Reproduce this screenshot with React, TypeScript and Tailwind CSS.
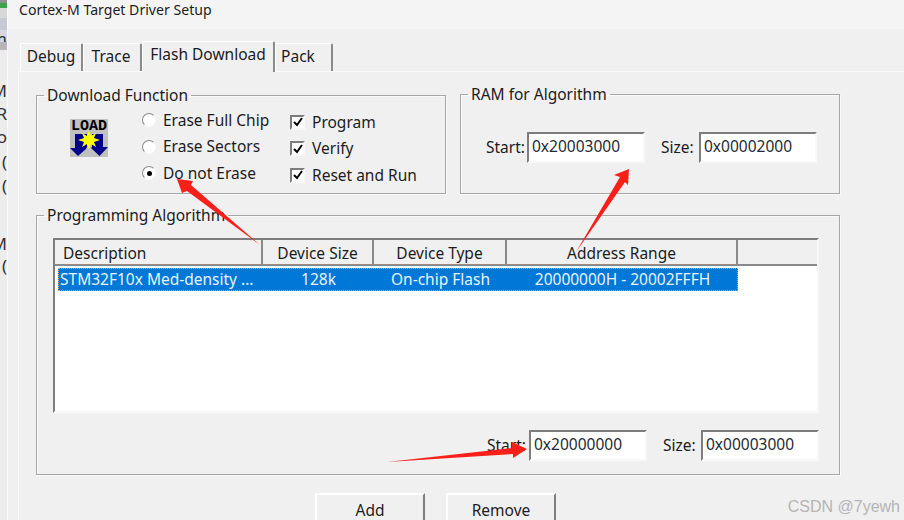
const FONT = "[font-family:'Noto_Sans','DejaVu_Sans',sans-serif]";

const COLUMNS = [
  { label: "Description", width: "w-[208px]", left: true },
  { label: "Device Size", width: "w-[111px]" },
  { label: "Device Type", width: "w-[133px]" },
  { label: "Address Range", width: "w-[231px]" },
];

const STRIP_ROWS = [
  { text: "", height: "h-[3px]", tone: "bg-[#8f8f8f]" },
  { text: "", height: "h-[5px]", tone: "bg-[#3fa34d]" },
  { text: "", height: "h-[10px]", tone: "bg-[#d8d8d8]" },
  { text: "", height: "h-[12px]", tone: "bg-[#c9c9d6]" },
  { text: "m", height: "h-[12px]", tone: "bg-[#d7d7e4]" },
  { text: "", height: "h-[8px]", tone: "bg-[#b9b3bb]" },
  { text: "", height: "h-[32px]", tone: "" },
  { text: "M", height: "h-[23px]", tone: "" },
  { text: "R", height: "h-[23px]", tone: "" },
  { text: "o", height: "h-[25px]", tone: "" },
  { text: "(", height: "h-[24px]", tone: "" },
  { text: "(", height: "h-[24px]", tone: "" },
  { text: "", height: "h-[34px]", tone: "" },
  { text: "M", height: "h-[22px]", tone: "" },
  { text: "(", height: "h-[24px]", tone: "" },
];

function LoadIcon() {
  return (
    <svg width="38" height="38" viewBox="0 0 38 38" className="block">
      <rect width="38" height="38" fill="#c0c0c0" />
      <text x="1" y="11" textLength="36" lengthAdjust="spacingAndGlyphs" fontFamily="Liberation Mono" fontWeight="700" fontSize="14" fill="#000">
        LOAD
      </text>
      <path d="M5 15H17V28L16 30 8 37 0 29H5z" fill="#00008a" />
      <path d="M22 15H33V28H38L29.5 37 21 29 22 28z" fill="#00008a" />
      <path d="M19 11l2 6 5-3-2 5 6 2-6 2 2 5-5-3-2 6-2-6-5 3 2-5-6-2 6-2-2-5 5 3z" fill="#ffff00" />
    </svg>
  );
}

function Radio({ checked }: { checked?: boolean }) {
  return (
    <span className="flex h-[14px] w-[14px] items-center justify-center rounded-full border border-t-[#8a8a8a] border-l-[#8a8a8a] border-r-[#f8f8f8] border-b-[#f8f8f8] bg-white">
      {checked && <span className="h-[5px] w-[5px] rounded-full bg-black" />}
    </span>
  );
}

function Check() {
  return (
    <span className="flex h-[15px] w-[15px] items-center justify-center border-2 border-t-[#7d7d7d] border-l-[#7d7d7d] border-r-[#f8f8f8] border-b-[#f8f8f8] bg-white">
      <svg width="10" height="10" viewBox="0 0 10 10">
        <path d="M1 5l3 3 5-7" fill="none" stroke="#000" strokeWidth="2" />
      </svg>
    </span>
  );
}

function Field({ value, className }: { value: string; className?: string }) {
  return (
    <div className={`h-[31px] w-[118px] border-2 border-t-[#7d7d7d] border-l-[#7d7d7d] border-r-[#f8f8f8] border-b-[#f8f8f8] bg-white pl-[3px] text-[15.5px] leading-[24px] text-[#1f2a33] ${className ?? ""}`}>
      {value}
    </div>
  );
}

function Group({ title, className, children }: { title: string; className: string; children: React.ReactNode }) {
  return (
    <fieldset className={`border border-[#a6a6a6] shadow-[inset_1px_1px_0_#fafafa,1px_1px_0_#fafafa] ${className}`}>
      <legend className="ml-[7px] px-[3px] text-[15.5px] leading-[20px]">{title}</legend>
      {children}
    </fieldset>
  );
}

function Tab({ label, width, active, className }: { label: string; width: string; active?: boolean; className?: string }) {
  return (
    <div
      className={`${width} flex items-center justify-center rounded-t-[2px] border-t border-l border-t-white border-l-white border-r-2 border-r-[#8a8a8a] bg-[#f0f0f0] text-[15.5px] ${
        active ? "relative z-10 -mb-px h-[31px] pb-[5px]" : "h-[28px] pb-[1px]"
      } ${className ?? ""}`}
    >
      {label}
    </div>
  );
}

function Arrows() {
  return (
    <svg width="904" height="520" viewBox="0 0 904 520" className="pointer-events-none absolute left-0 top-0 z-20">
      <path d="M260 245 L191 185 L193 181 L177 179 L182 193 L187 191 Z" fill="#fb1f1a" />
      <path d="M576 252 L620 177 L614 175 L629 169 L628 185 L625 182 Z" fill="#fb1f1a" />
      <path d="M387 462 L513 454 L513 458 L527 449 L512 442 L512 448 Z" fill="#fb1f1a" />
    </svg>
  );
}

export default function App() {
  return (
    <div className={`relative flex h-[520px] w-[904px] overflow-hidden bg-[#f0f0f0] text-[#1c1c1c] ${FONT}`}>
      <div className="flex w-[7px] shrink-0 flex-col overflow-hidden bg-[#ececec] text-[17px] leading-none text-[#333]">
        {STRIP_ROWS.map((row, i) => (
          <div key={i} className={`flex shrink-0 justify-end whitespace-nowrap ${row.height} ${row.tone}`}>
            {row.text}
          </div>
        ))}
      </div>

      <div className="flex min-w-0 flex-1 flex-col border-l border-[#fafafa]">
        <div className="flex h-[29px] shrink-0 items-start bg-[#f4f4f4] pl-[11px] text-[14.1px] leading-[19px]">
          Cortex-M Target Driver Setup
        </div>

        <div className="flex h-[42px] shrink-0 items-end pl-[12px]">
          <Tab label="Debug" width="w-[63px]" />
          <Tab label="Trace" width="w-[59px]" className="pr-[2px]" />
          <Tab label="Flash Download" width="w-[133px]" active />
          <Tab label="Pack" width="w-[58px]" className="pr-[11px]" />
        </div>

        <div className="ml-[10px] flex-1 border-t border-l border-[#fafafa] pl-[17px] pt-[12px]">
          <div className="flex items-start gap-[14px]">
            <Group title="Download Function" className="mt-px h-[109px] w-[410px]">
              <div className="flex">
                <div className="ml-[33px] mt-[14px] shrink-0">
                  <LoadIcon />
                </div>
                <div className="ml-[34px] mt-[2px] w-[148px] shrink-0">
                  {["Erase Full Chip", "Erase Sectors", "Do not Erase"].map((label, i) => (
                    <div key={label} className="flex h-[26.5px] items-center gap-[7px] text-[15.5px]">
                      <Radio checked={i === 2} />
                      {label}
                    </div>
                  ))}
                </div>
                <div className="mt-[4px]">
                  {["Program", "Verify", "Reset and Run"].map((label) => (
                    <div key={label} className="flex h-[26.5px] items-center gap-[7px] text-[15.5px]">
                      <Check />
                      {label}
                    </div>
                  ))}
                </div>
              </div>
            </Group>

            <Group title="RAM for Algorithm" className="h-[110px] w-[380px]">
              <div className="mt-[28px] flex items-center">
                <span className="ml-[25px] w-[41px] text-[15.5px]">Start:</span>
                <Field value="0x20003000" />
                <span className="ml-[16px] w-[38px] text-[15.5px]">Size:</span>
                <Field value="0x00002000" />
              </div>
            </Group>
          </div>

          <Group title="Programming Algorithm" className="mt-[11px] h-[270px] w-[804px]">
            <div className="ml-[16px] mt-[13px] h-[175px] w-[766px] border-2 border-t-[#7d7d7d] border-l-[#7d7d7d] border-r-[#f8f8f8] border-b-[#f8f8f8] bg-white">
              <div className="flex h-[26px] border-b-2 border-[#8a8a8a] bg-[#f0f0f0] text-[15.5px]">
                {COLUMNS.map((col) => (
                  <div
                    key={col.label}
                    className={`${col.width} flex shrink-0 items-center border-r-2 border-[#8a8a8a] pt-[3px] ${col.left ? "pl-[8px]" : "justify-center"}`}
                  >
                    {col.label}
                  </div>
                ))}
              </div>
              <div className="ml-[3px] mt-[2px] flex h-[23px] w-[680px] items-center border border-dotted border-[#f5a05a] bg-[#0078d7] text-[15.5px] text-[#e8f3fc]">
                <span className="w-[204px] shrink-0 whitespace-nowrap pl-[1px]">STM32F10x Med-density ...</span>
                <span className="w-[111px] shrink-0 text-center">128k</span>
                <span className="w-[133px] shrink-0 text-center">On-chip Flash</span>
                <span className="w-[231px] shrink-0 text-center">20000000H - 20002FFFH</span>
              </div>
            </div>

            <div className="mt-[17px] flex items-center justify-end pr-[20px]">
              <span className="w-[42px] text-[15.5px]">Start:</span>
              <Field value="0x20000000" />
              <span className="ml-[16px] w-[38px] text-[15.5px]">Size:</span>
              <Field value="0x00003000" />
            </div>
          </Group>

          <div className="ml-[279px] mt-[18px] flex gap-[21px]">
            {["Add", "Remove"].map((label) => (
              <div
                key={label}
                className="flex h-[34px] w-[110px] items-center justify-center border-2 border-b-0 border-t-white border-l-white border-r-[#808080] text-[15.5px]"
              >
                {label}
              </div>
            ))}
          </div>
        </div>
      </div>

      <Arrows />
      <span className="absolute bottom-[5px] right-[4px] z-20 text-[16px] leading-none text-[#b4b4b4] [font-family:'Liberation_Sans',sans-serif]">
        CSDN @7yewh
      </span>
    </div>
  );
}
